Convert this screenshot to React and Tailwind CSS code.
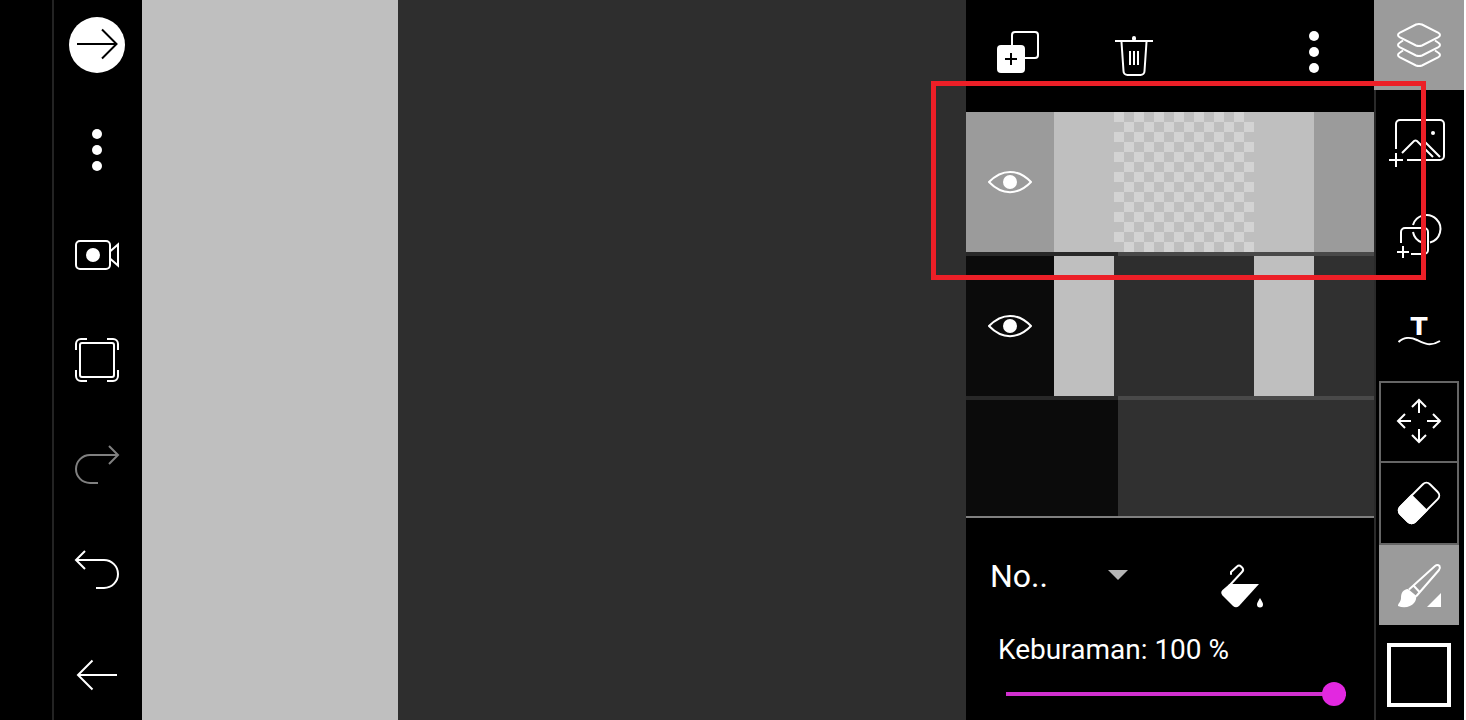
import React, { useState } from 'react';

const Icon = ({ size = 48, children, className = '' }) => (
    <svg
        width={size}
        height={size}
        viewBox={`0 0 ${size} ${size}`}
        fill="none"
        stroke="currentColor"
        strokeWidth={2}
        className={`shrink-0 ${className}`}
        aria-hidden="true"
    >
        {children}
    </svg>
);

const DotsIcon = () => (
    <Icon>
        <g fill="currentColor" stroke="none">
            <circle cx="24" cy="8" r="5" />
            <circle cx="24" cy="24" r="5" />
            <circle cx="24" cy="40" r="5" />
        </g>
    </Icon>
);

const EyeIcon = () => (
    <Icon>
        <path strokeLinejoin="round" d="M3 24C16 10.5 32 10.5 45 24 32 37.5 16 37.5 3 24Z" />
        <circle cx="24" cy="24" r="7" fill="currentColor" stroke="none" />
    </Icon>
);

const leftTools = [
    {
        id: 'next',
        icon: (
            <span className="flex size-14 rounded-full bg-white text-black">
                <Icon size={56}>
                    <path d="M8 27h39M33 12.5 47.5 27 33 41.5" />
                </Icon>
            </span>
        ),
    },
    { id: 'more', icon: <DotsIcon /> },
    {
        id: 'record',
        icon: (
            <Icon>
                <rect x="3" y="10" width="34" height="28" rx="4" />
                <circle cx="20" cy="24" r="7" fill="currentColor" stroke="none" />
                <path d="M37.5 20 45 13.5v21L37.5 28" />
            </Icon>
        ),
    },
    {
        id: 'fit',
        icon: (
            <Icon>
                <rect x="7" y="7" width="34" height="34" rx="2" />
                <path d="M3 14V8a5 5 0 0 1 5-5h6M34 3h6a5 5 0 0 1 5 5v6M45 34v6a5 5 0 0 1-5 5h-6M14 45H8a5 5 0 0 1-5-5v-6" />
            </Icon>
        ),
    },
    {
        id: 'redo',
        icon: (
            <Icon className="text-[#808080]">
                <path d="M45 14H17a14 14 0 0 0 0 28h8M36 5l9 9-9 9" />
            </Icon>
        ),
    },
    {
        id: 'undo',
        icon: (
            <Icon>
                <path d="M3 14h28a14 14 0 0 1 0 28h-8M12 5l-9 9 9 9" />
            </Icon>
        ),
    },
    {
        id: 'back',
        icon: (
            <Icon>
                <path d="M44 24H5M19.5 9.5 5 24l14.5 14.5" />
            </Icon>
        ),
    },
];

const insertTools = [
    {
        id: 'image',
        icon: (
            <Icon size={60}>
                <path d="M7 41V16a4 4 0 0 1 4-4h40a4 4 0 0 1 4 4v32a4 4 0 0 1-4 4H18" />
                <path d="M0 52h14M7 45v14" />
                <path d="M13 45l12-12q1.500-1 3 0l16 16M35 33l16 16" />
                <circle cx="44" cy="25" r="2" fill="currentColor" stroke="none" />
            </Icon>
        ),
    },
    {
        id: 'shape',
        icon: (
            <Icon size={60}>
                <path d="M12 39V28a4 4 0 0 1 4-4h19a4 4 0 0 1 4 4v18a4 4 0 0 1-4 4H22" />
                <path d="M24 21A14 14 0 1 1 41 38.500M24 28A14 14 0 0 0 33 38.500" />
                <path d="M8 48h12M14 42v12" />
            </Icon>
        ),
    },
    {
        id: 'text',
        icon: (
            <Icon size={60}>
                <text
                    x="30"
                    y="35"
                    textAnchor="middle"
                    fill="currentColor"
                    stroke="none"
                    className="font-['DejaVu_Sans',sans-serif] text-[25px] font-bold"
                >
                    T
                </text>
                <path d="M9.500 42C14 37.500 21 36.500 28 40S41 47 51 41" />
            </Icon>
        ),
    },
];

const iconButton = 'flex shrink-0 items-center justify-center cursor-pointer';

const LeftToolbar = () => (
    <nav className="ml-13 flex w-[90px] shrink-0 flex-col justify-between shadow-[inset_2px_0_0_#232323]">
        {leftTools.map((tool) => (
            <button key={tool.id} type="button" aria-label={tool.id} className={`${iconButton} h-[90px]`}>
                {tool.icon}
            </button>
        ))}
    </nav>
);

const LayersPanel = () => {
    const [opacity, setOpacity] = useState(100);

    return (
        <section className="relative flex w-[408px] shrink-0 flex-col">
            {/* Layer actions */}
            <header className="flex h-28 items-start pt-7 pr-9 pl-7">
                <button type="button" aria-label="add layer" className={iconButton}>
                    <Icon>
                        <path d="M18 17V7a3 3 0 0 1 3-3h20a3 3 0 0 1 3 3v20a3 3 0 0 1-3 3H31" />
                        <rect x="3" y="17" width="28" height="28" rx="4" fill="currentColor" stroke="none" />
                        <path stroke="#000" d="M11 31h12M17 25v12" />
                    </Icon>
                </button>
                <button type="button" aria-label="delete layer" className={`${iconButton} ml-17`}>
                    <Icon>
                        <rect x="22" y="8" width="4" height="5" rx="2" fill="currentColor" stroke="none" />
                        <path d="M5 13h38M11.500 14l2 29a4 4 0 0 0 4 4h13a4 4 0 0 0 4-4l2-29M20 23v14M24 23v14M28 23v14" />
                    </Icon>
                </button>
                <button type="button" aria-label="layer options" className={`${iconButton} ml-auto`}>
                    <DotsIcon />
                </button>
            </header>

            {/* Layer list */}
            <ul className="flex grow flex-col border-b-2 border-[#808080] bg-[linear-gradient(to_right,#0b0b0b_152px,#303030_152px)]">
                <li className="flex h-36 border-b-4 border-transparent">
                    <div className="flex grow bg-[#9b9b9b]">
                        <button type="button" aria-label="toggle layer 2" className={`${iconButton} w-22`}>
                            <EyeIcon />
                        </button>
                        <div className="flex w-[260px] justify-center bg-[#bfbfbf]">
                            <div className="w-[140px] bg-[repeating-conic-gradient(#bfbfbf_0_25%,#d3d3d3_0_50%)] bg-size-[20px_20px]" />
                        </div>
                    </div>
                </li>
                <li className="-mt-1 h-1 bg-white/12" />
                <li className="flex h-[140px]">
                    <button type="button" aria-label="toggle layer 1" className={`${iconButton} w-22`}>
                        <EyeIcon />
                    </button>
                    <div className="flex w-[260px] justify-center bg-[#bfbfbf]">
                        <div className="w-[140px] bg-[#2e2e2e]" />
                    </div>
                </li>
                <li className="h-1 bg-white/12" />
            </ul>

            {/* Blend mode and opacity */}
            <div className="flex h-[202px] shrink-0 flex-col pt-[38px] font-[Roboto,sans-serif]">
                <div className="flex items-start pl-6">
                    <div className="relative w-[138px]">
                        <select aria-label="blend mode" className="h-10 w-full appearance-none bg-transparent text-[32px] leading-10 outline-none">
                            <option>No..</option>
                        </select>
                        <svg className="pointer-events-none absolute top-[14px] right-0 text-[#b5b5b5]" width="20" height="10" viewBox="0 0 20 10" fill="currentColor" aria-hidden="true">
                            <path d="M0 0h20L10 10z" />
                        </svg>
                    </div>
                    <button type="button" aria-label="fill" className={`${iconButton} ml-21`}>
                        <Icon size={60}>
                            <path strokeLinecap="round" d="M19 18V16L25 10.500Q27 8.500 29 10.500L30.500 12Q32 14 30 16L17 30" />
                            <path fill="currentColor" stroke="none" d="M17.500 28H47L27 50Q24 52.500 21 50L10.500 39.500Q8 36.500 10.500 34Z" />
                            <path fill="currentColor" stroke="none" d="M48 42C50 45.500 51 47 51 48.500a3 3 0 0 1-6 0C45 47 46 45.500 48 42Z" />
                        </Icon>
                    </button>
                </div>
                <label htmlFor="opacity" className="mt-[18px] pl-8 text-[28px] leading-8">
                    Keburaman: {opacity} %
                </label>
                <div className="mt-4 flex pr-7 pl-10">
                    <input
                        id="opacity"
                        type="range"
                        min="0"
                        max="100"
                        value={opacity}
                        onChange={(e) => setOpacity(Number(e.target.value))}
                        className="h-6 w-full cursor-pointer appearance-none bg-transparent outline-none [&::-webkit-slider-runnable-track]:h-1 [&::-webkit-slider-runnable-track]:bg-[#d130cf] [&::-webkit-slider-thumb]:-mt-[10px] [&::-webkit-slider-thumb]:size-6 [&::-webkit-slider-thumb]:appearance-none [&::-webkit-slider-thumb]:rounded-full [&::-webkit-slider-thumb]:bg-[#e228e0]"
                    />
                </div>
            </div>

            {/* Highlight frame round the selected layer */}
            <div className="pointer-events-none absolute top-[81px] -right-[52px] -left-[35px] z-10 h-[199px] border-5 border-[#ec1f27]" />
        </section>
    );
};

const RightToolbar = () => (
    <nav className="flex w-[90px] shrink-0 flex-col items-center shadow-[inset_2px_0_0_#2a2a2a]">
        <button type="button" aria-label="layers" className={`${iconButton} h-[90px] w-full bg-[#9b9b9b]`}>
            <Icon size={60}>
                <path d="M27 9.500Q30 8.500 33 9.500L49 17.500Q53 20 49 22.500L33 30.500Q30 31.500 27 30.500L11 22.500Q7 20 11 17.500Z" />
                <path d="M14 25.500 11 27.500Q7 30 11 32.500L27 40.500Q30 41.500 33 40.500L49 32.500Q53 30 49 27.500L46 25.500" />
                <path d="M14 35.500 11 37.500Q7 40 11 42.500L27 50.500Q30 51.500 33 50.500L49 42.500Q53 40 49 37.500L46 35.500" />
            </Icon>
        </button>
        {insertTools.map((tool) => (
            <button key={tool.id} type="button" aria-label={tool.id} className={`${iconButton} h-24 w-full`}>
                {tool.icon}
            </button>
        ))}

        {/* Drawing modes */}
        <div className="mt-[3px] flex w-20 flex-col">
            <button type="button" aria-label="move" className={`${iconButton} h-[82px] border-2 border-[#666]`}>
                <Icon size={60}>
                    <path d="M30 21V8M23 15l7-7 7 7M30 37v13M23 43l7 7 7-7M22 29H9M16 22l-7 7 7 7M38 29h13M44 22l7 7-7 7" />
                </Icon>
            </button>
            <button type="button" aria-label="eraser" className={`${iconButton} h-[82px] border-2 border-t-0 border-[#666]`}>
                <Icon size={60}>
                    <g transform="rotate(-45 30 30)">
                        <rect x="9" y="19.500" width="42" height="21" rx="5" />
                        <path fill="currentColor" d="M30 19.500H14a5 5 0 0 0-5 5v11a5 5 0 0 0 5 5h16z" />
                    </g>
                </Icon>
            </button>
            <button type="button" aria-label="brush" className={`${iconButton} h-20 bg-[#9b9b9b]`}>
                <Icon size={60}>
                    <path d="M20 34.500 46 11Q48.500 9 50.500 11 51.500 13 50 15L27 41.500M24.500 30.500 30.500 37" />
                    <path fill="currentColor" stroke="none" d="M19 34C14 34.500 12 38 12 43 12 47 9 48 9 51 15 53.500 22 52 25 48 27.500 45 27 43 27.500 41Z" />
                    <path fill="currentColor" stroke="none" d="M52 38v14H38z" />
                </Icon>
            </button>
        </div>
        <button type="button" aria-label="colour" className="mt-[18px] size-16 shrink-0 cursor-pointer border-4 border-white bg-black" />
    </nav>
);

const App = () => (
    <div className="min-h-screen bg-white pr-0.5 flex">
        <main className="flex grow bg-black text-white">
            <LeftToolbar />
            {/* Canvas */}
            <div className="flex grow bg-[#2e2e2e]">
                <div className="w-64 bg-[#bfbfbf]" />
            </div>
            <LayersPanel />
            <RightToolbar />
        </main>
    </div>
);

export default App;
